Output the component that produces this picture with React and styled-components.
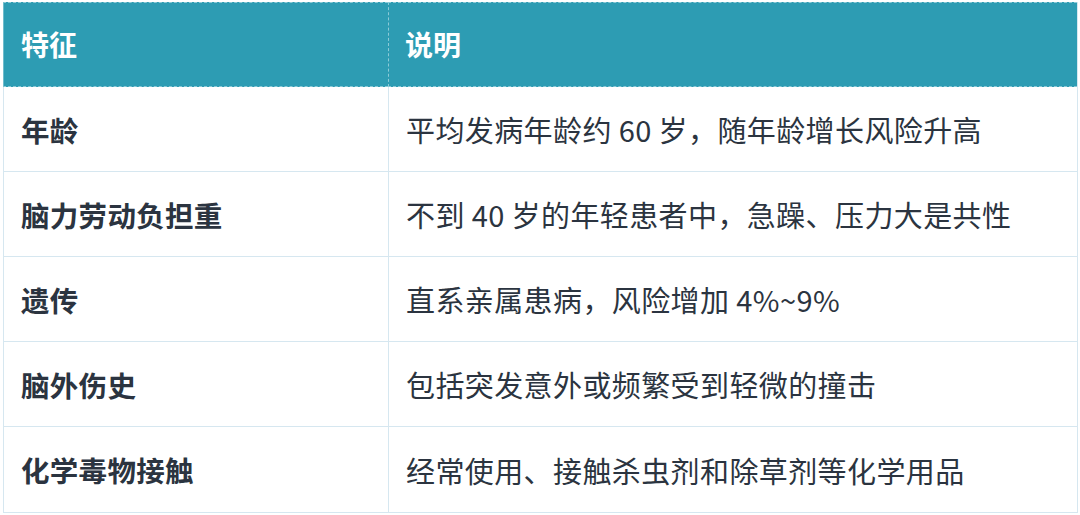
import React from 'react';
import styled, { createGlobalStyle } from 'styled-components';

const GlobalStyle = createGlobalStyle`
  html, body {
    margin: 0;
    padding: 0;
    background: #fff;
  }
  body {
    font-family: "Noto Sans CJK SC", "Noto Sans", sans-serif;
  }
`;

const rows = [
  ['年龄', '平均发病年龄约 60 岁，随年龄增长风险升高'],
  ['脑力劳动负担重', '不到 40 岁的年轻患者中，急躁、压力大是共性'],
  ['遗传', '直系亲属患病，风险增加 4%~9%'],
  ['脑外伤史', '包括突发意外或频繁受到轻微的撞击'],
  ['化学毒物接触', '经常使用、接触杀虫剂和除草剂等化学用品'],
];

const Page = styled.div`
  padding: 2px 2px 0 3px;
`;

const Table = styled.div`
  display: grid;
  grid-template-columns: 385px 1fr;
  grid-auto-rows: 85px;
  width: 1075px;
  border-right: 1px solid #d6e7f0;
  border-bottom: 1px solid #d6e7f0;
  box-sizing: border-box;
`;

const HeadCell = styled.div`
  display: flex;
  align-items: center;
  padding-left: ${(p) => (p.$first ? '17px' : '16px')};
  padding-bottom: 2px;
  background: #2d9cb3;
  color: #fff;
  font-size: 28px;
  font-weight: 700;
  border-left: 1px ${(p) => (p.$first ? 'solid #6fbccc' : 'dashed #8ccad7')};
  border-top: 1px dashed #8ccad7;
  border-bottom: 1px dashed #8ccad7;
  box-sizing: border-box;
`;

const Cell = styled.div`
  display: flex;
  align-items: center;
  padding-left: ${(p) => (p.$label ? '17px' : '17px')};
  color: #2b3440;
  font-size: ${(p) => (p.$label ? '28.5px' : '29px')};
  font-weight: ${(p) => (p.$label ? 700 : 400)};
  letter-spacing: ${(p) => (p.$label ? '0.3px' : '0.4px')};
  border-left: 1px solid #d6e7f0;
  border-bottom: ${(p) => (p.$last ? 'none' : '1px solid #d6e7f0')};
  box-sizing: border-box;
  white-space: nowrap;
`;

export default function App() {
  return (
    <Page>
      <GlobalStyle />
      <Table>
        <HeadCell $first>特征</HeadCell>
        <HeadCell>说明</HeadCell>
        {rows.map(([k, v], i) => (
          <React.Fragment key={k}>
            <Cell $label $last={i === rows.length - 1}>{k}</Cell>
            <Cell $last={i === rows.length - 1}>{v}</Cell>
          </React.Fragment>
        ))}
      </Table>
    </Page>
  );
}
